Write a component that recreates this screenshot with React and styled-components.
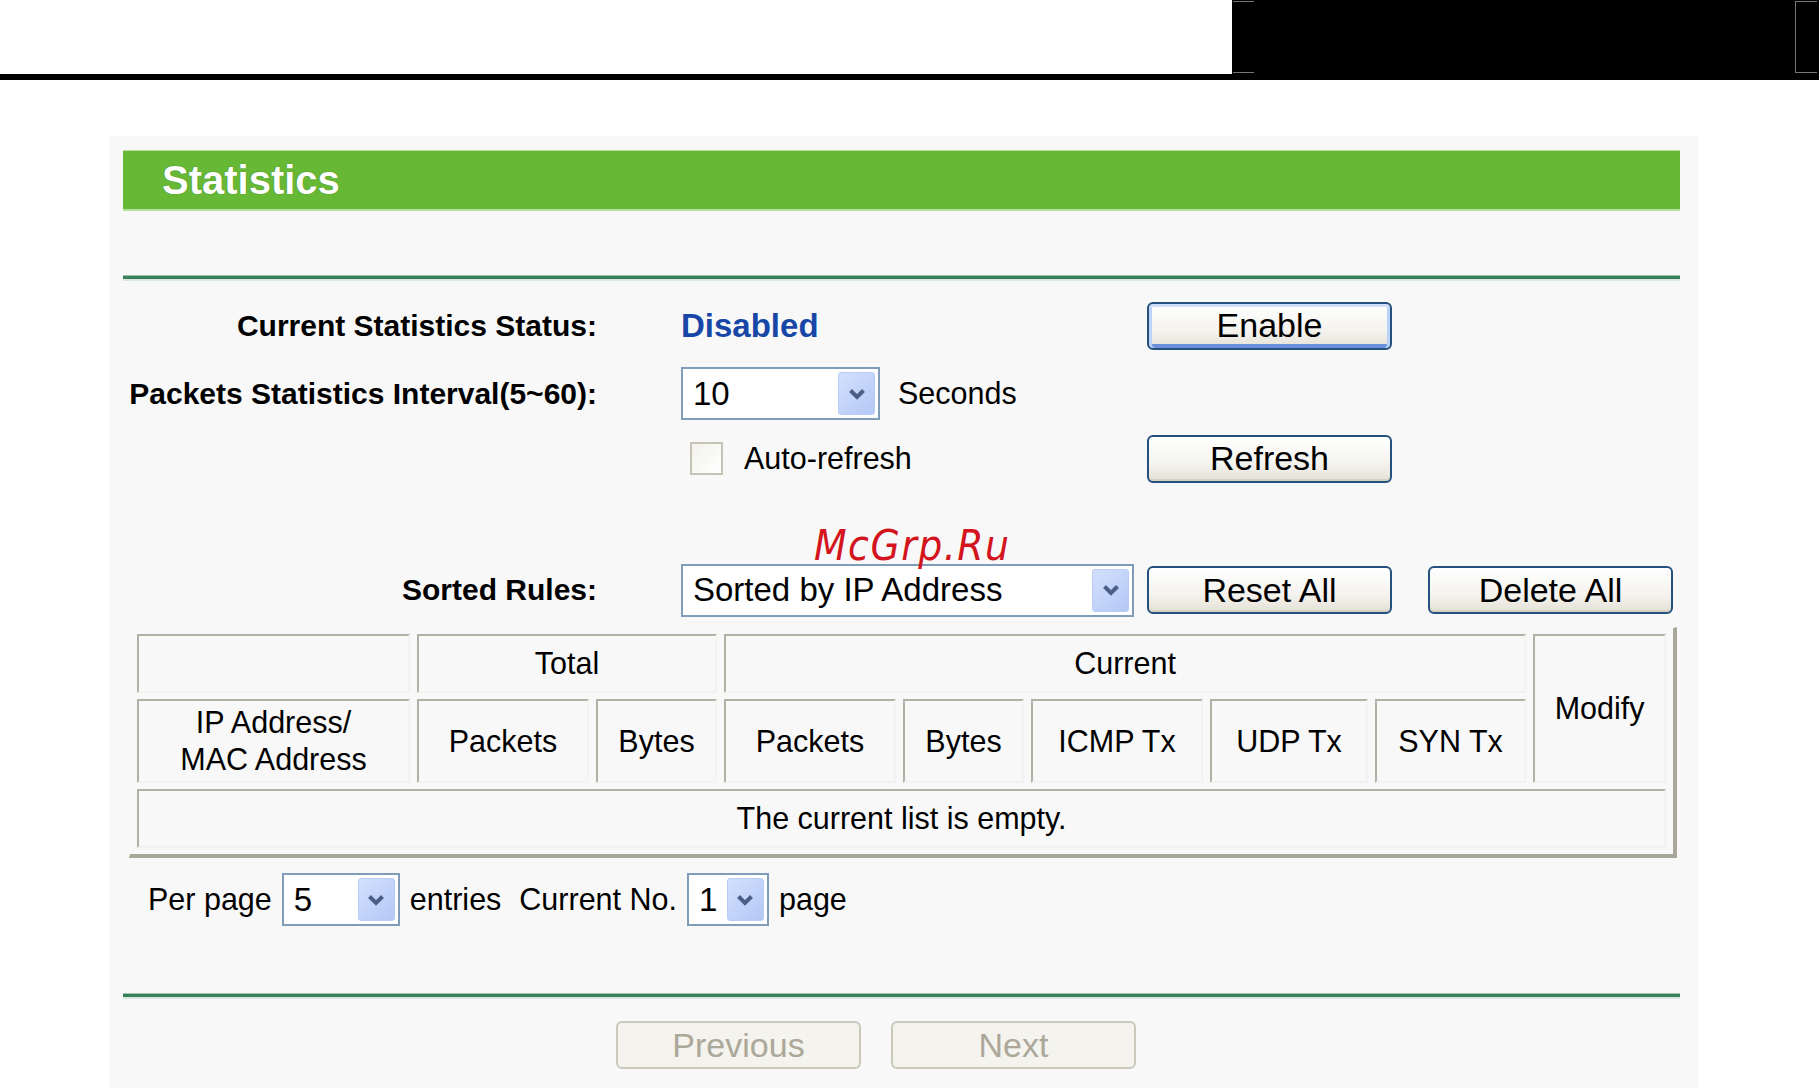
import React from "react"
import styled, { createGlobalStyle } from "styled-components"

const GlobalStyle = createGlobalStyle`
  * { box-sizing: border-box; }
  html, body { margin: 0; padding: 0; background: #fff; }
  body {
    font-family: "Liberation Sans", Arial, sans-serif;
    color: #000;
  }
`

const Chevron = () => (
  <svg width="18" height="12" viewBox="0 0 18 12">
    <path d="M2.5 2.5 L9 9 L15.5 2.5" fill="none" stroke="#4a5f86" strokeWidth="4" strokeLinejoin="miter" />
  </svg>
)

const Dropdown = ({ value, width }) => (
  <Select $w={width}>
    <SelectText>{value}</SelectText>
    <DropButton>
      <Chevron />
    </DropButton>
  </Select>
)

const App = () => {
  return (
    <>
      <GlobalStyle />
      <TopBar>
        <TopSpacer />
        <Screen />
      </TopBar>

      <Panel>
        <Header>Statistics</Header>
        <Rule $top={64} />

        <Row $h={47} $top={21}>
          <Label>Current Statistics Status:</Label>
          <Field>
            <Status>Disabled</Status>
          </Field>
          <Button $focus>Enable</Button>
        </Row>

        <Row $h={53} $top={18}>
          <Label>Packets Statistics Interval(5~60):</Label>
          <Field>
            <Dropdown value="10" width={199} />
            <Text $left={18}>Seconds</Text>
          </Field>
        </Row>

        <Row $h={49} $top={14}>
          <Label />
          <Field>
            <Checkbox />
            <Text $left={21}>Auto-refresh</Text>
          </Field>
          <Button>Refresh</Button>
        </Row>

        <Row $h={52} $top={81}>
          <Label>Sorted Rules:</Label>
          <Field>
            <Dropdown value="Sorted by IP Address" width={453} />
          </Field>
          <Button>Reset All</Button>
          <Button $left={36}>Delete All</Button>
        </Row>

        <StatTable>
          <colgroup>
            <col style={{ width: 273 }} />
            <col style={{ width: 172 }} />
            <col style={{ width: 121 }} />
            <col style={{ width: 172 }} />
            <col style={{ width: 121 }} />
            <col style={{ width: 172 }} />
            <col style={{ width: 158 }} />
            <col style={{ width: 151 }} />
            <col style={{ width: 133 }} />
          </colgroup>
          <thead>
            <tr>
              <Cell as="th" $h={59}></Cell>
              <Cell as="th" colSpan={2}>Total</Cell>
              <Cell as="th" colSpan={5}>Current</Cell>
              <Cell as="th" rowSpan={2}>Modify</Cell>
            </tr>
            <tr>
              <Cell as="th" $h={84}>IP Address/<br />MAC Address</Cell>
              <Cell as="th">Packets</Cell>
              <Cell as="th">Bytes</Cell>
              <Cell as="th">Packets</Cell>
              <Cell as="th">Bytes</Cell>
              <Cell as="th">ICMP Tx</Cell>
              <Cell as="th">UDP Tx</Cell>
              <Cell as="th">SYN Tx</Cell>
            </tr>
          </thead>
          <tbody>
            <tr>
              <Cell colSpan={9} $h={59}>The current list is empty.</Cell>
            </tr>
          </tbody>
        </StatTable>

        <Pager>
          <Text>Per page</Text>
          <PagerGap />
          <Dropdown value="5" width={118} />
          <PagerGap />
          <Text>entries</Text>
          <Text $left={18}>Current No.</Text>
          <PagerGap />
          <Dropdown value="1" width={82} />
          <PagerGap />
          <Text>page</Text>
        </Pager>

        <Rule $top={67} />

        <NavRow>
          <Button disabled>Previous</Button>
          <Button disabled $left={30}>Next</Button>
        </NavRow>

        <Watermark>McGrp.Ru</Watermark>
      </Panel>
    </>
  )
}

export default App

const TopBar = styled.div`
  display: flex;
  height: 80px;
  border-bottom: 6px solid #000;
`

const TopSpacer = styled.div`
  flex: 1;
  background: #fff;
`

const Screen = styled.div`
  position: relative;
  width: 587px;
  background: #000;

  &::before,
  &::after {
    content: "";
    position: absolute;
    top: 1px;
    bottom: 1px;
    width: 21px;
    border-top: 1px solid #777;
    border-bottom: 1px solid #777;
  }
  &::before {
    left: 1px;
  }
  &::after {
    right: 2px;
    border-left: 1px solid #777;
  }
`

const Panel = styled.main`
  position: relative;
  width: 1589px;
  margin: 56px 0 0 109px;
  padding: 14px 18px 19px 14px;
  background: #f8f8f8;
`

const Header = styled.h1`
  margin: 0;
  height: 61px;
  display: flex;
  align-items: center;
  padding-left: 39px;
  background: #67b935;
  border-top: 1px solid #b7de9c;
  border-bottom: 2px solid #b7de9c;
  color: #fff;
  font-size: 40px;
  font-weight: bold;
  text-shadow: 0 0 1px #2f6e1a;
`

const Rule = styled.div`
  margin-top: ${p => p.$top}px;
  height: 6px;
  border-top: 1px solid #9fc4ae;
  border-bottom: 2px solid #d8e8de;
  background: #37805a;
`

const Row = styled.div`
  display: flex;
  align-items: center;
  height: ${p => p.$h}px;
  margin-top: ${p => p.$top}px;
`

const Label = styled.div`
  width: 474px;
  margin-right: 84px;
  text-align: right;
  font-size: 30px;
  font-weight: bold;
  white-space: nowrap;
`

const Field = styled.div`
  width: 466px;
  height: 100%;
  display: flex;
  align-items: center;
`

const Status = styled.span`
  font-size: 33px;
  font-weight: bold;
  color: #1747a6;
`

const Text = styled.span`
  margin-left: ${p => p.$left || 0}px;
  font-size: 30.5px;
  white-space: nowrap;
`

const Select = styled.div`
  display: flex;
  align-items: stretch;
  width: ${p => p.$w}px;
  height: 53px;
  padding: 3px 3px 3px 10px;
  background: #fff;
  border: 2px solid #7f9db9;
`

const SelectText = styled.span`
  flex: 1;
  display: flex;
  align-items: center;
  font-size: 33px;
  white-space: nowrap;
`

const DropButton = styled.span`
  width: 37px;
  display: flex;
  align-items: center;
  justify-content: center;
  border: 1px solid #b8ccf6;
  border-radius: 3px;
  background: linear-gradient(135deg, #d3e0fd, #b4c8f6);
`

const Checkbox = styled.span`
  width: 33px;
  height: 33px;
  margin-left: 9px;
  border: 2px solid #c5c3b5;
  background: linear-gradient(135deg, #f2f1ec, #ffffff);
`

const Button = styled.button`
  width: 245px;
  height: 48px;
  margin-left: ${p => p.$left || 0}px;
  padding: 0;
  font-family: "Liberation Sans", Arial, sans-serif;
  font-size: 34px;
  color: #000;
  border: 2px solid #25517f;
  border-radius: 6px;
  background: linear-gradient(#ffffff, #f4f3ee 60%, #e4e1d6);
  box-shadow: ${p =>
    p.$focus
      ? "inset 0 3px 0 #cfdff9, inset 3px 0 0 #bcd2f7, inset -3px 0 0 #bcd2f7, inset 0 -4px 0 #6c8fdc"
      : "inset 0 -2px 0 #d6d2c3"};

  &:disabled {
    color: #aca899;
    border-color: #cbc9bc;
    background: #f4f3ee;
    box-shadow: none;
  }
`

const StatTable = styled.table`
  margin: 11px 0 0 6px;
  width: 1548px;
  table-layout: fixed;
  border-collapse: separate;
  border-spacing: 7px 6px;
  border-top: 1px solid #fbfbfb;
  border-left: 1px solid #fbfbfb;
  border-right: 4px solid #a8a798;
  border-bottom: 4px solid #a8a798;
  font-size: 30.5px;
`

const Cell = styled.td`
  height: ${p => (p.$h ? `${p.$h}px` : "auto")};
  padding: 0;
  border: 2px solid;
  border-color: #b2b1a4 #f2f2f0 #f2f2f0 #b2b1a4;
  text-align: center;
  vertical-align: middle;
  font-weight: normal;
  line-height: 37px;
  white-space: nowrap;
`

const Pager = styled.div`
  display: flex;
  align-items: center;
  height: 53px;
  margin-top: 15px;
  padding-left: 25px;
`

const PagerGap = styled.span`
  width: 10px;
`

const NavRow = styled.div`
  display: flex;
  margin-top: 22px;
  padding-left: 493px;
`

const Watermark = styled.div`
  position: absolute;
  left: 705px;
  top: 385px;
  font-family: "DejaVu Sans Condensed", "DejaVu Sans", sans-serif;
  font-style: italic;
  font-size: 42px;
  color: #d3141c;
  letter-spacing: 1.5px;
`
